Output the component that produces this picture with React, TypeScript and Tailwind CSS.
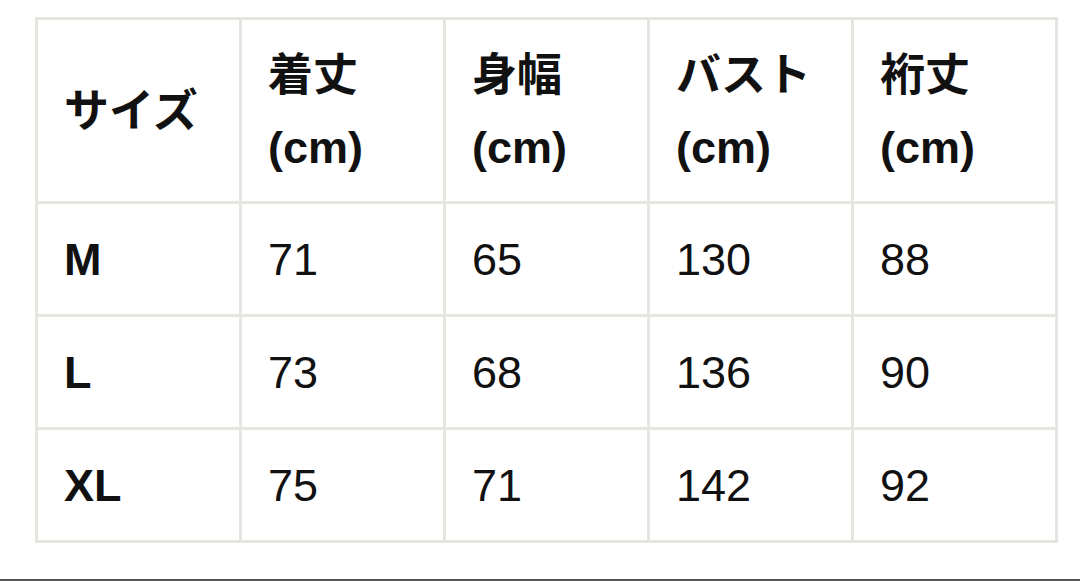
import React from "react";

const FONT = '"Liberation Sans", "Noto Sans CJK JP", Arial, sans-serif';

const headers: [string, string | null][] = [
  ["サイズ", null],
  ["着丈", "(cm)"],
  ["身幅", "(cm)"],
  ["バスト", "(cm)"],
  ["裄丈", "(cm)"],
];

const rows: string[][] = [
  ["M", "71", "65", "130", "88"],
  ["L", "73", "68", "136", "90"],
  ["XL", "75", "71", "142", "92"],
];

export default function App() {
  return (
    <div
      className="w-[1080px] h-[581px] bg-white flex flex-col overflow-hidden"
      style={{ fontFamily: FONT }}
    >
      <div className="pt-[17px] pl-[35px]">
        <div className="grid grid-cols-[repeat(5,204px)] w-[1023px] border-t-[3px] border-l-[3px] border-[#e6e6e1]">
          {headers.map(([a, b], i) => (
            <div
              key={i}
              className="h-[184px] border-r-[3px] border-b-[3px] border-[#e6e6e1] flex flex-col justify-center pl-[26px] pt-[2px] text-[45px] leading-[72px] font-bold text-[#111]"
            >
              <span>{a}</span>
              {b && <span>{b}</span>}
            </div>
          ))}
          {rows.map((r, ri) =>
            r.map((c, ci) => (
              <div
                key={`${ri}-${ci}`}
                className={`h-[113px] border-r-[3px] border-b-[3px] border-[#e6e6e1] flex items-center pl-[26px] pt-[2px] text-[45px] leading-[72px] text-[#111] ${
                  ci === 0 ? "font-bold" : "font-normal"
                }`}
              >
                {c}
              </div>
            ))
          )}
        </div>
      </div>
      <div className="mt-auto h-[2px] bg-[#555555]" />
    </div>
  );
}
